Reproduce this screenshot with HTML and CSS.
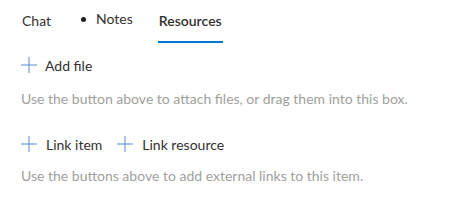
FILE: index.html
```html
<!DOCTYPE html>
<html>
<head>
<meta charset="utf-8">
<link rel="stylesheet" href="styles.css">
</head>
<body>
<div class="panel">
  <nav class="tabs">
    <span class="tab tab-chat">Chat</span>
    <span class="tab tab-notes"><span class="dot"></span>Notes</span>
    <span class="tab tab-active">Resources</span>
  </nav>
  <section class="section section-files">
    <div class="actions">
      <button class="action" type="button">
        <svg class="plus" width="16" height="16" viewBox="0 0 16 16"><rect x="7.5" y="0" width="1" height="16"/><rect x="0" y="7.5" width="16" height="1"/></svg>
        <span>Add file</span>
      </button>
    </div>
    <p class="hint">Use the button above to attach files, or drag them into this box.</p>
  </section>
  <section class="section section-links">
    <div class="actions">
      <button class="action" type="button">
        <svg class="plus" width="16" height="16" viewBox="0 0 16 16"><rect x="7.5" y="0" width="1" height="16"/><rect x="0" y="7.5" width="16" height="1"/></svg>
        <span>Link item</span>
      </button>
      <button class="action" type="button">
        <svg class="plus" width="16" height="16" viewBox="0 0 16 16"><rect x="7.5" y="0" width="1" height="16"/><rect x="0" y="7.5" width="16" height="1"/></svg>
        <span>Link resource</span>
      </button>
    </div>
    <p class="hint hint-links">Use the buttons above to add external links to this item.</p>
  </section>
</div>
</body>
</html>
```
FILE: styles.css
```css
html, body {
  margin: 0;
  padding: 0;
  background: #ffffff;
}
body {
  font-family: "Lato", "Liberation Sans", sans-serif;
  font-size: 14px;
  color: #323130;
}
.tabs {
  display: flex;
  align-items: flex-start;
  height: 43px;
  padding-left: 22px;
}
.tab {
  line-height: 41px;
  white-space: nowrap;
}
.tab-chat {
  margin-right: 30px;
}
.tab-notes {
  display: flex;
  align-items: center;
  line-height: 37px;
  margin-right: 26px;
}
.dot {
  width: 5px;
  height: 5px;
  border-radius: 50%;
  background: #201f1e;
  margin-right: 10px;
  margin-top: 1px;
}
.tab-active {
  position: relative;
  height: 43px;
  font-weight: 600;
}
.tab-active::after {
  content: "";
  position: absolute;
  left: -1px;
  right: -1px;
  bottom: 0;
  height: 2px;
  background: #0078d4;
}
.section {
  padding-left: 21px;
}
.actions {
  display: flex;
  align-items: center;
  gap: 15px;
}
.section-files .actions {
  height: 44px;
}
.section-links {
  margin-top: 19px;
}
.section-links .actions {
  height: 32px;
}
.action {
  display: inline-flex;
  align-items: center;
  gap: 9px;
  padding: 0;
  margin: 0;
  border: 0;
  background: none;
  font: inherit;
  color: #323130;
  cursor: pointer;
}
.section-files .action {
  gap: 8px;
}
.plus {
  display: block;
  fill: #5b8ad6;
}
.hint {
  margin: 2px 0 0;
  line-height: 20px;
  color: #a19f9d;
}
.hint-links {
  margin-top: 6px;
}
```
